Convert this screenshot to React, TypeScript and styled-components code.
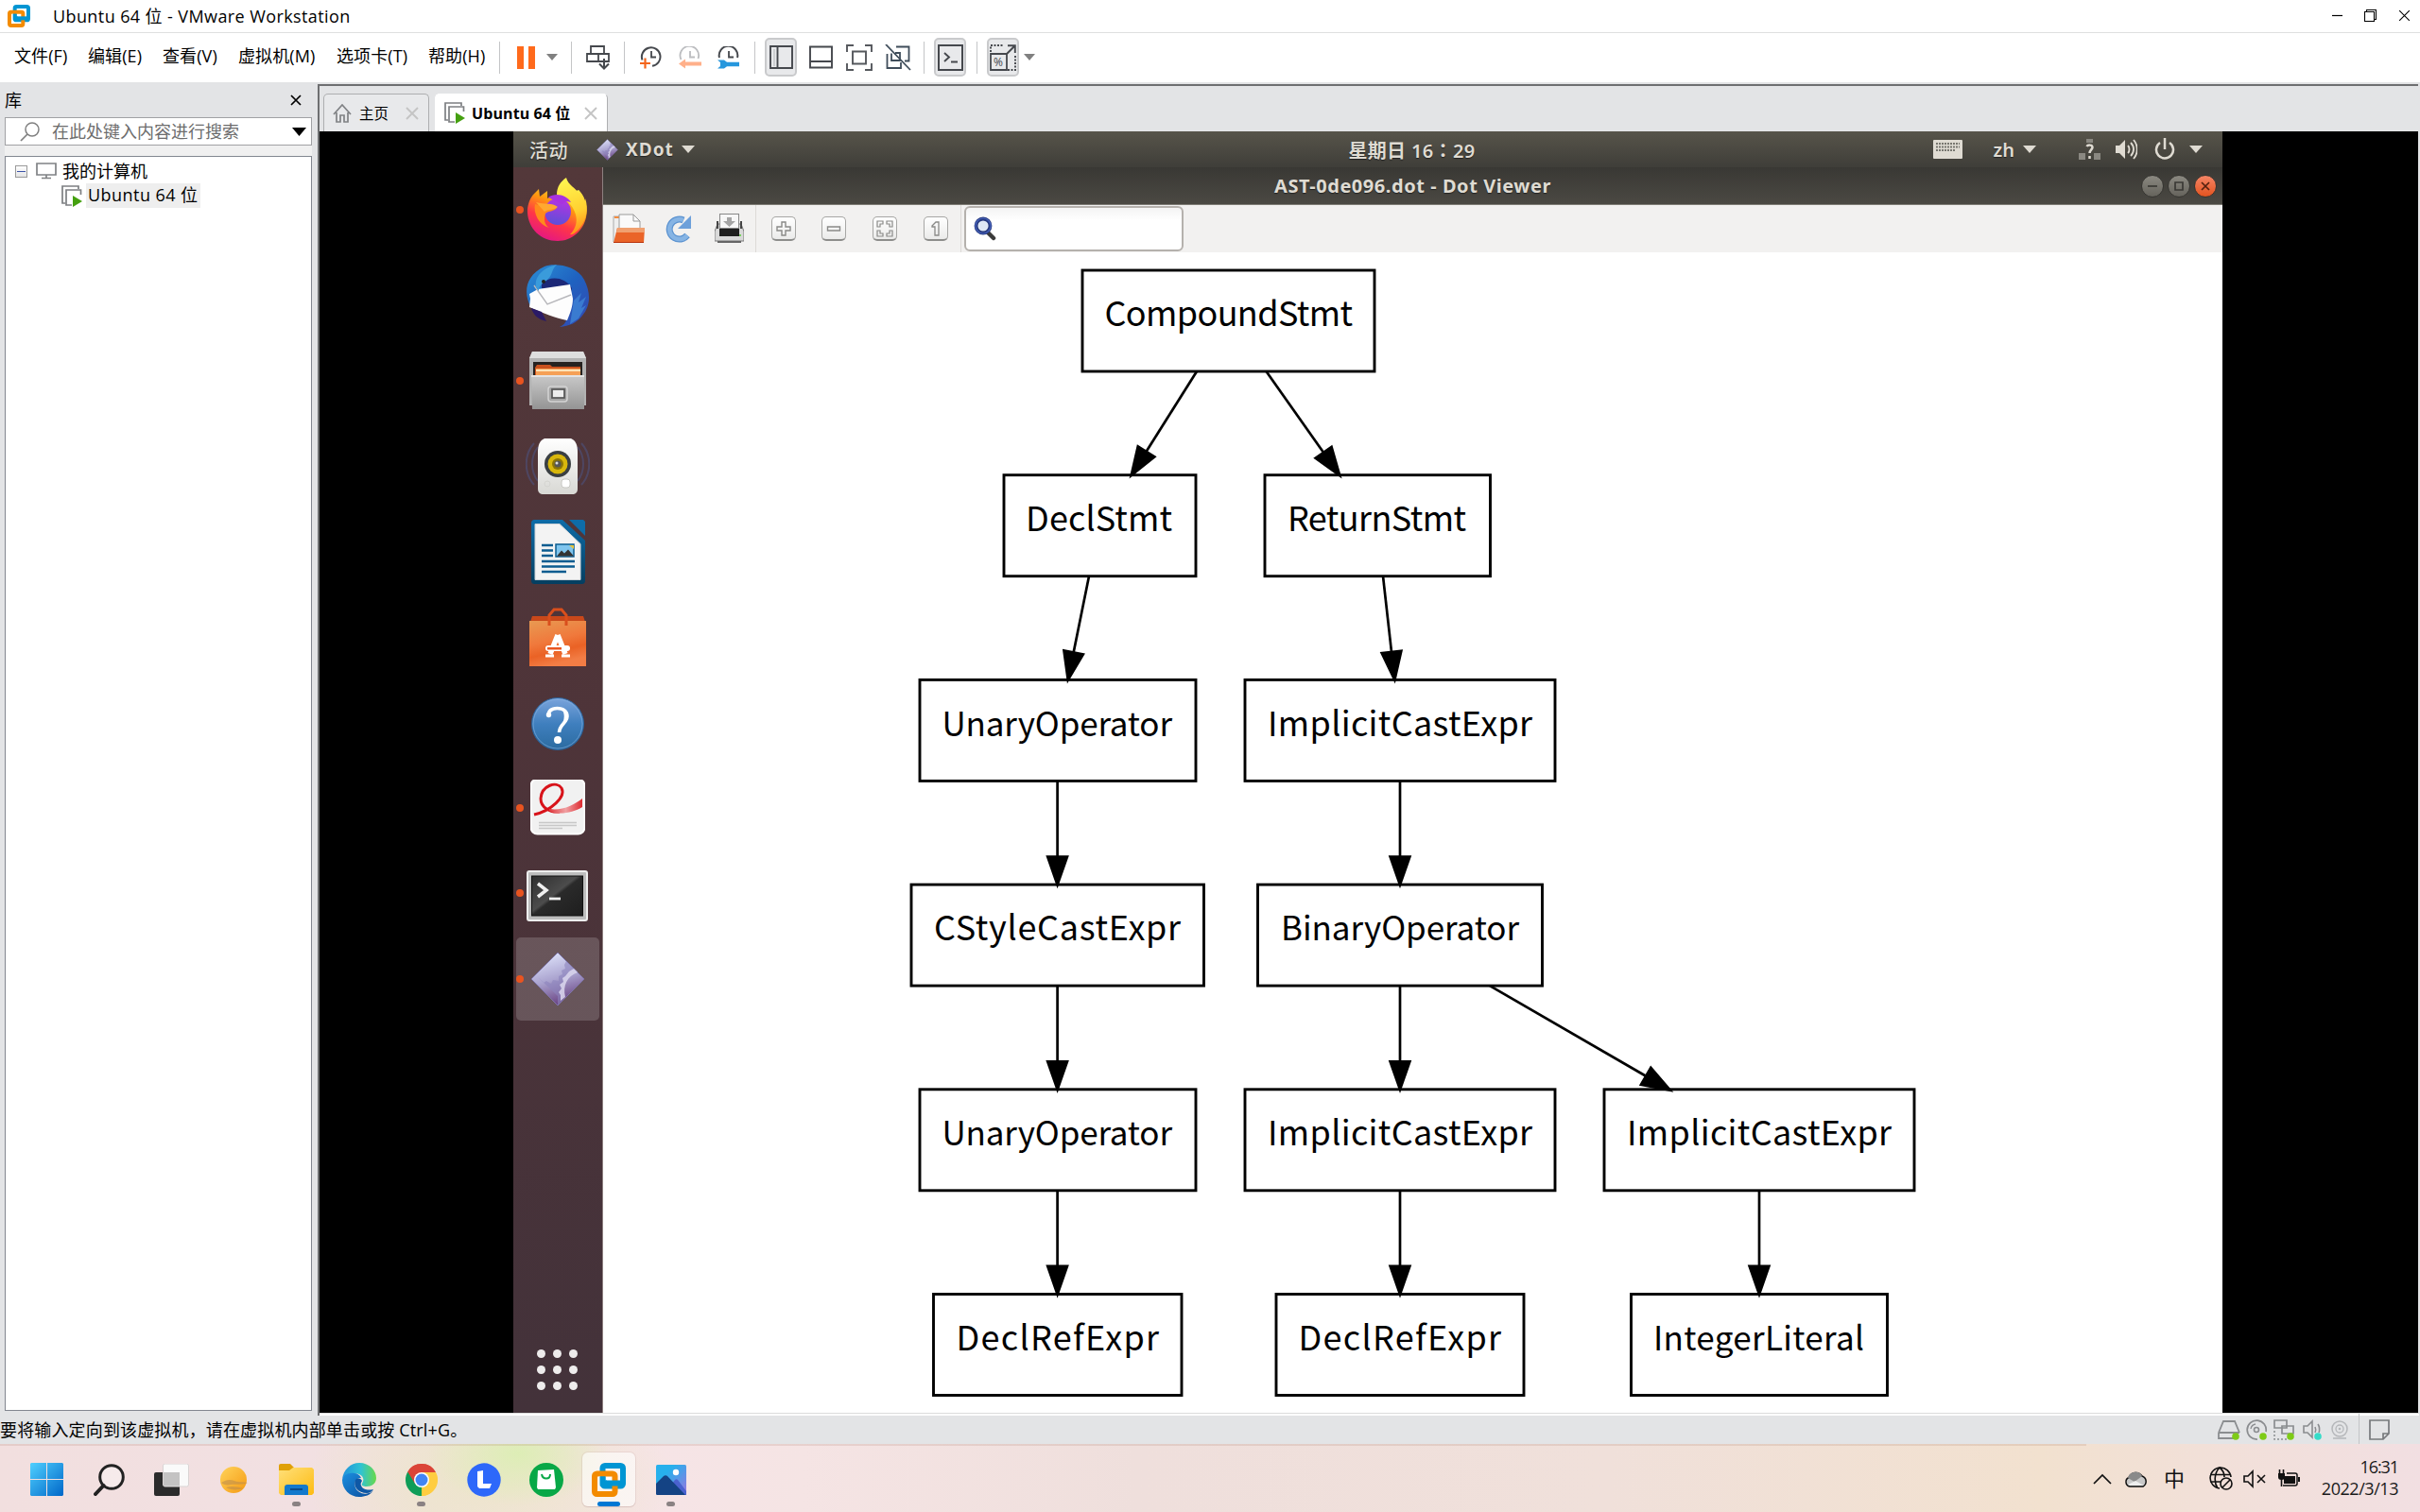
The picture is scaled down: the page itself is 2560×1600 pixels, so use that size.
import React from "react";
import styled, { createGlobalStyle, css } from "styled-components";

const Global = createGlobalStyle`
  * { box-sizing: border-box; }
  html, body { margin: 0; padding: 0; }
  body {
    width: 2560px; height: 1600px; overflow: hidden; background: #e3e4e6; color: #000;
    font: 18px "Open Sans", "Noto Sans CJK SC", sans-serif;
  }
  svg { display: block; flex: none; }
`;

/* ---------- shared pieces ---------- */

const Desktop = styled.div`
  width: 2560px; height: 1600px; display: flex; flex-direction: column; overflow: hidden;
`;

const Text = styled.span<{ $size?: number; $ls?: number; $color?: string; $weight?: number; $ml?: number; $lift?: number }>`
  flex: none;
  white-space: pre;
  font-size: ${(p) => p.$size ?? 18}px;
  letter-spacing: ${(p) => p.$ls ?? 0}px;
  color: ${(p) => p.$color ?? "#000"};
  font-weight: ${(p) => p.$weight ?? 400};
  margin-left: ${(p) => p.$ml ?? 0}px;
  padding-bottom: ${(p) => p.$lift ?? 0}px;
`;

const Slot = styled.div<{ $w: number; $ml?: number }>`
  flex: none; width: ${(p) => p.$w}px; margin-left: ${(p) => p.$ml ?? 0}px;
  display: flex; align-items: center; justify-content: center;
`;

type IconProps = { w: number; h: number; vb?: string; children: React.ReactNode };
const Icon = ({ w, h, vb, children }: IconProps) => (
  <svg width={w} height={h} viewBox={vb ?? `0 0 ${w} ${h}`} fill="none">
    {children}
  </svg>
);

const Caret = ({ w = 12, h = 7, c = "#808080" }) => (
  <Icon w={w} h={h}><path d={`M0 0H${w}L${w / 2} ${h}Z`} fill={c} /></Icon>
);

const VmwareLogo = ({ s }: { s: number }) => (
  <Icon w={s} h={s} vb="0 0 36 36">
    <rect x="14.500" y="14.500" width="7" height="7" fill="#fff" />
    <rect x="11.500" y="3" width="21.500" height="21.500" rx="2.500" stroke="#0095d3" strokeWidth="6" />
    <rect x="3" y="11.500" width="21.500" height="21.500" rx="2.500" stroke="#f38b00" strokeWidth="6" />
    <path d="M15 21.500H30" stroke="#0095d3" strokeWidth="6" />
    <path d="M11.500 14.500V21.500H16" stroke="#0095d3" strokeWidth="6" />
    <path d="M8 14v12" stroke="#fff" strokeWidth="1" opacity=".7" />
  </Icon>
);

/* ---------- title and menu bars ---------- */

const TitleBar = styled.div`
  flex: none; height: 35px; background: #fff; border-bottom: 1px solid #dedfe0;
  display: flex; align-items: center; padding-left: 8px; padding-bottom: 1px;
`;
const Spacer = styled.div`flex: 1;`;

const MenuBar = styled.div`
  flex: none; height: 52px; background: #fff; display: flex; align-items: center;
  padding-left: 15px; padding-bottom: 1px;
`;
const MenuItem = styled.span<{ $w: number }>`
  flex: none; width: ${(p) => p.$w}px; white-space: nowrap; letter-spacing: 0.1px; padding-bottom: 5px;
`;
const VRule = styled.div<{ $ml: number }>`
  flex: none; width: 1px; height: 34px; background: #c4c5c7; margin-left: ${(p) => p.$ml}px;
`;
const ToolButton = styled.div<{ $ml: number }>`
  flex: none; width: 34px; height: 41px; margin-left: ${(p) => p.$ml}px;
  background: #e8e9eb; border: 2px solid #c9cacc; border-radius: 5px;
  display: flex; align-items: center; justify-content: center;
`;

const S = "#45484d";

const menus: [string, number][] = [
  ["文件(F)", 78], ["编辑(E)", 79], ["查看(V)", 80], ["虚拟机(M)", 104], ["选项卡(T)", 97], ["帮助(H)", 75],
];

const MenuRow = () => (
  <MenuBar>
    {menus.map(([t, w]) => <MenuItem key={t} $w={w}>{t}</MenuItem>)}
    <VRule $ml={0} />
    <Slot $w={19} $ml={18}>
      <Icon w={19} h={24}><path d="M0 0h7v24H0zM12 0h7v24h-7z" fill="#ff6a1c" /></Icon>
    </Slot>
    <Slot $w={12} $ml={12}><Caret /></Slot>
    <VRule $ml={14} />
    <Slot $w={26} $ml={15}>
      <Icon w={26} h={26}>
        <path d="M5 1h14v8H5zM1 9h12v8H1zM13 9h11v8H13z" stroke={S} strokeWidth="1.800" />
        <path d="M19 14v10M14 19.500l5 5 5-5" stroke={S} strokeWidth="2" />
      </Icon>
    </Slot>
    <VRule $ml={14} />
    <Slot $w={24} $ml={16}>
      <Icon w={24} h={24}>
        <path d="M2.500 14.500A9.800 9.800 0 1 1 13 20.800" stroke={S} strokeWidth="2" /><path d="M12 5v6.500h5" stroke={S} strokeWidth="1.800" />
        <path d="M0 18h11M5.500 12.500v11" stroke="#f4651c" strokeWidth="2.200" />
      </Icon>
    </Slot>
    <Slot $w={24} $ml={17}>
      <Icon w={24} h={24}><path d="M2.500 14A9.800 9.800 0 1 1 20.500 13" stroke="#bcbdc0" strokeWidth="1.800" /><path d="M12 5v6.500h5" stroke="#bcbdc0" strokeWidth="1.800" /><path d="M0 18.500l7-5v3h17v4H7v3z" fill="#ffb08a" /></Icon>
    </Slot>
    <Slot $w={24} $ml={17}>
      <Icon w={24} h={24}><path d="M2 12A9.800 9.800 0 1 1 21 12" stroke={S} strokeWidth="2" /><path d="M12 5v6.500h5" stroke={S} strokeWidth="1.800" /><path d="M0 14.500h7l3 2.200h13v4.600H10l-3 2.200H0l3-2.500v-4z" fill="#2697dd" /></Icon>
    </Slot>
    <VRule $ml={15} />
    <ToolButton $ml={10}>
      <Icon w={25} h={26}><path d="M1 1h23v23H1zM8.500 1v23" stroke={S} strokeWidth="1.900" /><path d="M5 4v18" stroke="#c4c6c9" strokeWidth="1.500" /></Icon>
    </ToolButton>
    <Slot $w={25} $ml={13}>
      <Icon w={25} h={26}><path d="M1 1.500h23v22H1zM1 17h23" stroke={S} strokeWidth="1.900" /></Icon>
    </Slot>
    <Slot $w={28} $ml={14}>
      <Icon w={28} h={28}><path d="M1 8V1h7M20 1h7v7M27 20v7h-7M8 27H1v-7M7 7.500h14v13H7z" stroke="#55585d" strokeWidth="1.900" /></Icon>
    </Slot>
    <Slot $w={28} $ml={13}>
      <Icon w={28} h={28}>
        <path d="M12 2.500h13.500v15H21M2.500 10v15H17v-6M7 9.500V17h9V9h-5" stroke="#3f4d5a" strokeWidth="1.800" />
        <path d="M1 0l26 27" stroke="#3f4d5a" strokeWidth="1.800" />
      </Icon>
    </Slot>
    <VRule $ml={13} />
    <ToolButton $ml={10}>
      <Icon w={27} h={28}><path d="M1 1h25v26H1z" stroke={S} strokeWidth="2" /><path d="M7 9l5 4.500-5 4.500M14 18.500h7" stroke={S} strokeWidth="1.900" /></Icon>
    </ToolButton>
    <VRule $ml={11} />
    <ToolButton $ml={10}>
      <Icon w={28} h={28}>
        <path d="M1 10h17v17H1z" stroke={S} strokeWidth="1.800" />
        <path d="M1 8V1h14M27 12v15h-8" stroke={S} strokeWidth="1.900" strokeDasharray="2 1.500" />
        <path d="M18 10l8-8M19 1.200h7.800V9" stroke={S} strokeWidth="1.900" />
        <text x="4" y="23" fontSize="12" fill={S} fontFamily="Open Sans">%</text>
      </Icon>
    </ToolButton>
    <Slot $w={12} $ml={5}><Caret /></Slot>
  </MenuBar>
);

/* ---------- library panel ---------- */

const Body = styled.div`flex: none; height: 1411px; display: flex; background: #e3e4e6;`;

const Library = styled.div`
  flex: none; width: 336px; padding: 0 6px 6px 5px; display: flex; flex-direction: column;
`;
const LibraryHead = styled.div`
  flex: none; height: 37px; display: flex; align-items: center; justify-content: space-between;
  padding: 1px 11px 0 0;
`;
const SearchBox = styled.div`
  flex: none; height: 30px; width: 325px; border: 1px solid #a0a1a4; background: #fff;
  display: flex; align-items: center; padding: 0 5px 0 15px;
`;
const Gap = styled.div`flex: none; height: 11px; width: 325px; background: #f0f0f0;`;
const Tree = styled.div`
  flex: none; height: 1328px; width: 325px; border: 1px solid #828790; background: #fff; padding-top: 2px;
`;
const TreeRow = styled.div<{ $pl: number }>`
  height: 26px; display: flex; align-items: center; padding-left: ${(p) => p.$pl}px;
`;
const Selected = styled.span`
  background: #eeeeee; height: 26px; display: flex; align-items: center; padding: 0 2px 4px; margin-left: 4px;
`;
const Expander = styled.div`
  width: 13px; height: 13px; border: 1px solid #9a9a9a; background: linear-gradient(#fff, #e4e4e4);
  display: flex; align-items: center; justify-content: center;
  &::after { content: ""; width: 9px; height: 1px; background: #3c53a8; }
`;

const VmIcon = () => (
  <Icon w={22} h={23}>
    <path d="M4 19H1V1h17v3" stroke="#7d7f82" strokeWidth="1.700" />
    <path d="M20.500 10V5H5v16h6" stroke="#7d7f82" strokeWidth="1.700" />
    <path d="M12 11l10 6-10 6z" fill="#45a010" />
  </Icon>
);

const LibraryPanel = () => (
  <Library>
    <LibraryHead>
      <Text $lift={2}>库</Text>
      <Icon w={12} h={12}><path d="M1 1l10 10M11 1L1 11" stroke="#000" strokeWidth="1.700" /></Icon>
    </LibraryHead>
    <SearchBox>
      <Icon w={21} h={21}><circle cx="13" cy="8" r="7" stroke="#808080" strokeWidth="1.500" /><path d="M8 13l-7 7" stroke="#808080" strokeWidth="1.700" /></Icon>
      <Text $ml={13} $lift={2} $color="#6d6d6d">在此处键入内容进行搜索</Text>
      <Spacer />
      <Caret w={15} h={9} c="#000" />
    </SearchBox>
    <Gap />
    <Tree>
      <TreeRow $pl={10}>
        <Expander />
        <Slot $w={22} $ml={9}>
          <Icon w={22} h={18}><path d="M1 1h20v12H1zM11 13v3M6 16.500h10" stroke="#808285" strokeWidth="1.700" /></Icon>
        </Slot>
        <Text $ml={6} $lift={3}>我的计算机</Text>
      </TreeRow>
      <TreeRow $pl={59}>
        <VmIcon />
        <Selected><Text $ls={0.45}>Ubuntu 64 位</Text></Selected>
      </TreeRow>
    </Tree>
  </Library>
);

/* ---------- tabs ---------- */

const Stage = styled.div`
  flex: none; width: 2222px; margin-top: 2px; border-left: 2px solid #6e6f71; border-top: 2px solid #6e6f71;
  display: flex; flex-direction: column;
`;
const Tabs = styled.div`
  flex: none; height: 48px; display: flex; align-items: flex-end; padding-left: 4px; gap: 6px;
`;
const Tab = styled.div<{ $w: number; $active?: boolean }>`
  flex: none; width: ${(p) => p.$w}px; height: 40px; border: 1px solid #aeafb1; border-bottom: 0;
  border-radius: 5px 5px 0 0; display: flex; align-items: center; padding: 0 10px 0 9px;
  background: ${(p) => (p.$active ? "#fff" : "#e8e9eb")};
  ${(p) => p.$active && css`border-left-color: #fff; border-top-color: #fff;`}
`;
const TabClose = () => (
  <Icon w={14} h={14}><path d="M1 1l12 12M13 1L1 13" stroke="#c4c4c4" strokeWidth="1.900" /></Icon>
);

/* ---------- guest desktop ---------- */

const Screen = styled.div`
  flex: none; height: 1356px; width: 2220px; background: #000; display: flex; padding-left: 205px;
`;
const ScreenEdge = styled.div`flex: none; height: 3px; border-top: 1px solid #dcdcdc; background: #fff; width: 2221px;`;
const Guest = styled.div`
  flex: none; width: 1808px; height: 1356px; display: flex; flex-direction: column; overflow: hidden;
  font-family: "Noto Sans", "Noto Sans CJK TC", sans-serif;
`;
const TopBar = styled.div`
  flex: none; height: 38px; background: linear-gradient(#57544a, #3f3e39); display: flex; align-items: center;
  padding: 0 21px 0 17px; text-shadow: 0 1px 1px #222;
`;
const GuestMain = styled.div`flex: 1; display: flex;`;
const Dock = styled.div`
  flex: none; width: 95px; background: linear-gradient(#53383a, #4e3439 45%, #43323a);
  display: flex; flex-direction: column; border-right: 1px solid #8d8080;
`;
const DockItem = styled.div`
  flex: none; height: 90.400px; display: flex; align-items: center; padding-left: 3px;
`;
const RunDot = styled.div<{ $on?: boolean }>`
  flex: none; width: 8px; height: 8px; border-radius: 50%; background: ${(p) => (p.$on ? "#e95420" : "transparent")};
`;
const DockTile = styled.div<{ $active?: boolean }>`
  flex: none; width: 88px; height: 88px; border-radius: 5px; display: flex; align-items: center;
  background: ${(p) => (p.$active ? "rgba(255,255,255,.17)" : "transparent")};
`;
const AppsGrid = styled.div`
  margin: auto 0 24px 25px; display: grid; grid-template-columns: repeat(3, 9px); gap: 8px;
`;
const AppsDot = styled.div`width: 9px; height: 9px; border-radius: 50%; background: #eeecec;`;

const Firefox = () => (
  <Icon w={66} h={68}>
    <defs>
      <linearGradient id="ffa" x1=".8" y1="0" x2=".3" y2="1"><stop offset="0" stopColor="#fff44f" /><stop offset=".35" stopColor="#ff980e" /><stop offset=".65" stopColor="#ff3647" /><stop offset="1" stopColor="#e31587" /></linearGradient>
      <linearGradient id="ffb" x1=".6" y1="0" x2=".4" y2="1"><stop offset="0" stopColor="#b833e1" /><stop offset="1" stopColor="#5b4fd8" /></linearGradient>
      <linearGradient id="ffc" x1=".5" y1="0" x2=".7" y2="1"><stop offset="0" stopColor="#fff44f" /><stop offset=".6" stopColor="#ffd030" /><stop offset="1" stopColor="#ff8a16" /></linearGradient>
    </defs>
    <path d="M7 18L13 12l1 8 8-6v8c6-4 12-4 17-2l16-7c8 9 10 20 8 29C60 56 48 67 33 67 15 67 2 54 1 37c-.3-7 2-14 6-19z" fill="url(#ffa)" />
    <path d="M32 18c0-8 4-14 10-18 2 8 10 11 14 17l-1-4c4 4 6 8 7 12l0-3c4 11 1 22-4 29-4 6-9 10-12 9 6-6 8-13 6-21-3-11-11-16-20-21z" fill="url(#ffc)" />
    <circle cx="33" cy="36" r="14" fill="url(#ffb)" />
    <path d="M23 21c8-6 20-2 24 5-5-2-8 0-9 2z" fill="#a832e0" />
    <path d="M9 28c9 3 18-1 23 4-3 4-9 3-12 6-2 6-1 12 4 15C13 50 7 38 9 28z" fill="#ff8a1c" />
    <path d="M10 26c10 3 17 0 23 5-5 4-10 2-14 5z" fill="#ffa930" />
  </Icon>
);

const Thunderbird = () => (
  <Icon w={70} h={70}>
    <defs>
      <linearGradient id="tb" x1="0" y1="0" x2="1" y2="1"><stop offset="0" stopColor="#2b8fd6" /><stop offset=".5" stopColor="#1f62c0" /><stop offset="1" stopColor="#3647b0" /></linearGradient>
    </defs>
    <path d="M21 4C30 0 55 2 63 18c7 13 7 28-2 38-6 8-14 11-24 12 4-2 6-4 7-7L6 46C-1 32 0 14 21 4z" fill="url(#tb)" />
    <path d="M18 22C26 14 42 14 50 27l-2 9-30-9z" fill="#1c2878" />
    <path d="M14 28l34-5 3 15c0 8-3 16-6 23-12-2-26-8-40-14l1-9-1-5z" fill="#fdfdfd" />
    <path d="M10 24l14 20 25-10" stroke="#b7b7bb" strokeWidth="1.400" />
    <path d="M7 48l11 4 5 10C14 60 9 55 7 48z" fill="#2a1a66" />
    <path d="M12 26C10 14 20 5 34 2c-6 5-4 11-10 16-5 4-9 6-9 12z" fill="#3a9bdb" />
    <path d="M52 40l8-8-3 10 8-6-5 12 5-3-8 14-9 6z" fill="#3a7bd0" />
    <circle cx="20" cy="20" r="2" fill="#222" />
  </Icon>
);

const Files = () => (
  <Icon w={60} h={62}>
    <defs><linearGradient id="fl" x1="0" y1="0" x2="0" y2="1"><stop offset="0" stopColor="#c9c9c9" /><stop offset="1" stopColor="#949494" /></linearGradient></defs>
    <path d="M3 0h54l3 7v50H0V7z" fill="#b2b2b2" />
    <path d="M3 0h54l3 7H0z" fill="#dedede" />
    <rect x="4" y="11" width="52" height="16" fill="#262220" />
    <path d="M6 17l2-3h14l2 2h30v10H6z" fill="#c9511e" />
    <rect x="7" y="18" width="47" height="8" fill="#f5a056" />
    <rect x="7" y="19" width="47" height="2" fill="#fde3b8" />
    <path d="M2 25h56v36H3z" fill="url(#fl)" />
    <path d="M2 25h56v2H2z" fill="#e4e4e4" />
    <rect x="20" y="37" width="20" height="16" rx="3" fill="#a5a5a5" stroke="#d3d3d3" strokeWidth="1.500" />
    <rect x="24" y="40" width="13" height="9" fill="#ececec" stroke="#555" strokeWidth="1.700" />
  </Icon>
);

const Rhythmbox = () => (
  <Icon w={68} h={64} vb="0 -2 68 64">
    <defs><linearGradient id="rb" x1="0" y1="0" x2="0" y2="1"><stop offset="0" stopColor="#fff" /><stop offset="1" stopColor="#d8d8d4" /></linearGradient></defs>
    <path d="M9 6C-2 18-2 38 9 50M13 10C5 20 5 36 13 46M59 6c11 12 11 32 0 44M55 10c8 10 8 26 0 36" stroke="#4d5484" strokeWidth="2" opacity=".55" />
    <path d="M20 1h28c5 2 7 7 7 14v39c0 4-2 6-6 6H19c-4 0-6-2-6-6V15C13 8 15 3 20 1z" fill="url(#rb)" />
    <circle cx="34" cy="28" r="14" fill="#3a3f42" />
    <circle cx="34" cy="28" r="10.500" fill="#d8b70c" />
    <circle cx="34" cy="28" r="6" fill="#8a7408" />
    <circle cx="34" cy="28" r="3.500" fill="#555" />
    <circle cx="33" cy="27" r="1.500" fill="#ddd" />
    <rect x="38" y="44" width="9" height="9" rx="3" fill="#fff" stroke="#c8c8c4" />
    <circle cx="23" cy="49" r="3" stroke="#d4d4d0" />
  </Icon>
);

const Writer = () => (
  <Icon w={57} h={68}>
    <defs><linearGradient id="wr" x1="0" y1="0" x2="0" y2="1"><stop offset="0" stopColor="#0e6ca8" /><stop offset="1" stopColor="#053e60" /></linearGradient></defs>
    <path d="M4 0h29l24 22v42c0 3-1 4-4 4H4c-3 0-4-1-4-4V4c0-3 1-4 4-4z" fill="url(#wr)" />
    <path d="M40 0h15l2 2v15z" fill="#0e6ca8" />
    <path d="M4 4.500h26l22 21v38H4z" fill="#f3f3f3" stroke="#cfd4d8" />
    <path d="M11 27h12M11 32.500h12M11 38h12M11 44h35M11 49.500h35M11 55h26" stroke="#0b5c90" strokeWidth="2.600" />
    <rect x="26" y="26" width="19" height="13" fill="#7fc5ee" stroke="#0b5c90" strokeWidth="1.500" />
    <path d="M27 38.500l5-6 3 3 4-4 6 7z" fill="#333" /><path d="M40 27h5v4z" fill="#e8c43a" />
  </Icon>
);

const Software = () => (
  <Icon w={60} h={62}>
    <defs><linearGradient id="sw" x1="0" y1="0" x2=".3" y2="1"><stop offset="0" stopColor="#e89a52" /><stop offset=".5" stopColor="#f0793c" /><stop offset=".75" stopColor="#ea6225" /><stop offset="1" stopColor="#f27d45" /></linearGradient></defs>
    <path d="M3 9h54l2 6H1z" fill="#c9481a" />
    <rect y="14" width="60" height="48" fill="url(#sw)" />
    <path d="M21 19V8l5-6h8l5 6v11" stroke="#d94f1c" strokeWidth="3" />
    <path d="M30 29l-8 20M30 29l8 20" stroke="#fff" strokeWidth="5.500" />
    <path d="M17 51h9M34 51h9" stroke="#fff" strokeWidth="3" />
    <rect x="17" y="40" width="26" height="6" rx="3" fill="#fff" />
    <rect x="19" y="42" width="15" height="2.500" fill="#e9541f" />
  </Icon>
);

const Help = () => (
  <Icon w={58} h={60} vb="0 -2 58 60">
    <defs><linearGradient id="hp" x1="0" y1="0" x2="0" y2="1"><stop offset="0" stopColor="#7ba4dc" /><stop offset=".5" stopColor="#3f7fbe" /><stop offset="1" stopColor="#2b6ba0" /></linearGradient></defs>
    <circle cx="29" cy="29" r="27.500" fill="url(#hp)" stroke="#2a6198" />
    <circle cx="29" cy="29" r="26" stroke="#86b1e0" opacity=".6" />
    <path d="M19 21c0-6 4-8.500 9.500-8.500C35 12.500 39 16 39 21c0 7-8 8-8.500 17" stroke="#fff" strokeWidth="3.600" />
    <circle cx="19.500" cy="19.500" r="2.700" fill="#fff" /><path d="M33 13c8 3 8 11 1 16 2-5 3-11-1-16z" fill="#fff" />
    <circle cx="29" cy="46" r="4" fill="#fff" />
  </Icon>
);

const Reader = () => (
  <Icon w={58} h={60} vb="0 1 58 60">
    <defs><linearGradient id="rd" x1="0" y1="0" x2="1" y2="0"><stop offset="0" stopColor="#e03a40" /><stop offset=".5" stopColor="#f0a0a2" /><stop offset="1" stopColor="#de2a30" /></linearGradient></defs>
    <rect x=".5" y=".5" width="57" height="58" rx="7" fill="#f1f1f1" stroke="#fff" strokeWidth="2" />
    <path d="M4 38C22 34 38 19 33 10 28 2 12 7 11 21c0 9 9 15 20 14" stroke="#d8131a" strokeWidth="3" />
    <path d="M20 32c14 2 26-4 35-11v9c-10 6-25 9-35 4z" fill="url(#rd)" />
    <path d="M9 46.500h40M9 49.500h40M9 52.500h25" stroke="#c7c7c7" strokeWidth="1.600" />
  </Icon>
);

const Terminal = () => (
  <Icon w={66} h={59} vb="0 -5 66 59">
    <defs><linearGradient id="tm" x1="0" y1="0" x2="1" y2="1"><stop offset="0" stopColor="#2e2e2e" /><stop offset=".45" stopColor="#4c4c4c" /><stop offset=".5" stopColor="#2a2a2a" /><stop offset="1" stopColor="#1e1e1e" /></linearGradient></defs>
    <rect x="1" y="1" width="63" height="52" rx="2" fill="#bdbdbd" stroke="#eee" strokeWidth="2" />
    <rect x="5.500" y="6" width="54" height="42" fill="url(#tm)" stroke="#111" />
    <path d="M12 14l9 7-9 7" stroke="#f0f0f0" strokeWidth="3.500" /><path d="M24 30h12" stroke="#f0f0f0" strokeWidth="2.800" />
  </Icon>
);

const Diamond = ({ s, id }: { s: number; id: string }) => (
  <Icon w={s} h={s} vb="0 0 58 58">
    <defs><linearGradient id={id} x1=".3" y1="0" x2=".6" y2="1"><stop offset="0" stopColor="#dfe4fb" /><stop offset=".5" stopColor="#aaa3cf" /><stop offset="1" stopColor="#643a7c" /></linearGradient></defs>
    <path d="M29 1l28 28-28 28L1 29z" fill={`url(#${id})`} stroke="#7d74a8" />
    <path d="M38 10l-2 4 1 4-4 2 1 4-4 2 0 5-6-1-2 4-5-3-3 2-6-6 21 20 0 10 5-6c-3-14 3-24 16-30z" fill="#8c84bd" opacity=".6" />
    <path d="M46 18l-5 3-4 5-3 2 1 4-4 3 2 4-3 4 2 3 0 6 5-4c-3-12 2-22 13-26z" fill="#dcd8ef" opacity=".85" />
  </Icon>
);

const dockApps: { icon: React.ReactNode; on?: boolean; active?: boolean }[] = [
  { icon: <Firefox />, on: true }, { icon: <Thunderbird /> }, { icon: <Files />, on: true }, { icon: <Rhythmbox /> },
  { icon: <Writer /> }, { icon: <Software /> }, { icon: <Help /> }, { icon: <Reader />, on: true },
  { icon: <Terminal />, on: true }, { icon: <Diamond s={58} id="dmd" />, on: true, active: true },
];

/* ---------- dot viewer ---------- */

const Viewer = styled.div`flex: none; width: 1713px; display: flex; flex-direction: column; background: #fff;`;
const ViewerTitle = styled.div`
  flex: none; height: 40px; background: linear-gradient(#393834, #4b4943); border-bottom: 1px solid #7f7d76;
  display: grid; grid-template-columns: 1fr auto 1fr; align-items: center; text-shadow: 0 1px 1px #222;
`;
const WinButtons = styled.div`display: flex; justify-content: flex-end; gap: 4px; padding-right: 6px;`;
const WinButton = styled.div<{ $close?: boolean }>`
  width: 24px; height: 24px; border-radius: 50%; border: 1px solid #353430; display: flex; align-items: center; justify-content: center;
  background: ${(p) => (p.$close ? "linear-gradient(#f58566, #e2531f)" : "linear-gradient(#8b8981, #65635c)")};
`;
const ViewerTools = styled.div`
  flex: none; height: 50px; background: #f2f1f0; display: flex; align-items: center; padding-left: 10px;
`;
const ToolRule = styled.div<{ $ml: number }>`
  flex: none; width: 1px; height: 50px; background: #dcdad7; margin-left: ${(p) => p.$ml}px;
`;
const KeyButton = styled.div<{ $ml: number }>`
  flex: none; width: 26px; height: 26px; margin-left: ${(p) => p.$ml}px; border: 1px solid #a7a7a5; border-bottom: 2px solid #8d8d8b;
  border-radius: 5px; background: linear-gradient(#fff, #ebebea); display: flex; align-items: center; justify-content: center;
`;
const FindBox = styled.div`
  flex: none; width: 232px; height: 48px; margin-left: 3px; border: 2px solid #b5b1ad; border-radius: 6px;
  background: linear-gradient(#f4f4f4, #fff 30%); display: flex; align-items: center; padding-left: 8px;
`;

const K = "#8a8a88";

type Node = { label: string; x1: number; x2: number; row: number; t1: number; t2: number; size?: number };
const nodes: Node[] = [
  { label: "CompoundStmt", x1: 1145, x2: 1454, row: 0, t1: 1169.5, t2: 1430 },
  { label: "DeclStmt", x1: 1062, x2: 1265, row: 1, t1: 1086, t2: 1239 },
  { label: "ReturnStmt", x1: 1338, x2: 1576.5, row: 1, t1: 1363, t2: 1550 },
  { label: "UnaryOperator", x1: 973, x2: 1265, row: 2, t1: 997.5, t2: 1239, size: 35 },
  { label: "ImplicitCastExpr", x1: 1317, x2: 1645, row: 2, t1: 1342, t2: 1620 },
  { label: "CStyleCastExpr", x1: 964, x2: 1273.5, row: 3, t1: 989, t2: 1248 },
  { label: "BinaryOperator", x1: 1330.5, x2: 1631.5, row: 3, t1: 1356, t2: 1606, size: 35 },
  { label: "UnaryOperator", x1: 973, x2: 1265, row: 4, t1: 997.5, t2: 1239, size: 35 },
  { label: "ImplicitCastExpr", x1: 1317, x2: 1645, row: 4, t1: 1342, t2: 1620 },
  { label: "ImplicitCastExpr", x1: 1697, x2: 2025, row: 4, t1: 1722, t2: 2000 },
  { label: "DeclRefExpr", x1: 987.5, x2: 1250, row: 5, t1: 1012.5, t2: 1225 },
  { label: "DeclRefExpr", x1: 1350, x2: 1612, row: 5, t1: 1374.5, t2: 1587 },
  { label: "IntegerLiteral", x1: 1725.5, x2: 1996.5, row: 5, t1: 1750, t2: 1971, size: 35 },
];
const ROW0 = 286;
const PITCH = 216.7;
const BOX = 107;
const top = (r: number) => ROW0 + PITCH * r;

/* from x, to x, source row */
const edges: [number, number, number][] = [
  [1266, 1196, 0], [1339.5, 1418, 0], [1152, 1129.5, 1], [1463, 1475.5, 1],
  [1118.6, 1118.6, 2], [1481, 1481, 2], [1118.6, 1118.6, 3], [1481, 1481, 3], [1576, 1768, 3],
  [1118.6, 1118.6, 4], [1481, 1481, 4], [1861, 1861, 4],
];

const GraphCanvas = styled.svg`
  font-family: "Noto Sans CJK SC", sans-serif;
`;

const Graph = () => (
  <GraphCanvas width="1713" height="1228" viewBox="638 267 1713 1228">
    {nodes.map((n, i) => (
      <g key={i}>
        <rect x={n.x1} y={top(n.row)} width={n.x2 - n.x1} height={BOX} fill="#fff" stroke="#000" strokeWidth="2.900" />
        <text x={n.t1 - 1} y={top(n.row) + 59.2} fontSize={n.size ?? 36} textLength={n.t2 - n.t1 + 2} fill="#000">{n.label}</text>
      </g>
    ))}
    {edges.map(([a, b, r], i) => {
      const y1 = top(r) + BOX;
      const y2 = top(r + 1) + 1.5;
      const len = Math.hypot(b - a, y2 - y1);
      const ux = (b - a) / len, uy = (y2 - y1) / len;
      const bx = b - ux * 31.5, by = y2 - uy * 31.5;
      return (
        <g key={i}>
          <path d={`M${a} ${y1}L${bx} ${by}`} stroke="#000" strokeWidth="2.700" />
          <path d={`M${b} ${y2}L${bx - uy * 11} ${by + ux * 11}L${bx + uy * 11} ${by - ux * 11}Z`} fill="#000" stroke="#000" strokeWidth="1.800" />
        </g>
      );
    })}
  </GraphCanvas>
);

const GL = "#dfdbd2";

const GuestDesktop = () => (
  <Guest>
    <TopBar>
      <Text $size={20} $ls={0.5} $weight={500} $color={GL}>活动</Text>
      <Slot $w={23} $ml={30}><Diamond s={23} id="dms" /></Slot>
      <Text $size={19} $weight={700} $color={GL} $ml={8} $ls={1}>XDot</Text>
      <Slot $w={14} $ml={8}><Caret w={14} h={8} c={GL} /></Slot>
      <Spacer />
      <Text $size={20} $weight={600} $color={GL} $ls={0.35}>星期日 16：29</Text>
      <Slot $w={31} $ml={484}>
        <Icon w={31} h={20}><rect width="31" height="20" rx="1" fill={GL} /><path d="M3 4h25M3 7.500h25M3 11h20" stroke="#77766f" strokeWidth="2" strokeDasharray="2 1" /></Icon>
      </Slot>
      <Text $size={20} $weight={600} $color={GL} $ml={33}>zh</Text>
      <Slot $w={14} $ml={9}><Caret w={14} h={8} c={GL} /></Slot>
      <Slot $w={24} $ml={45}>
        <Icon w={24} h={24}><path d="M8 1h7v4H8zM0 16h7v7H0zM16 16h7v7h-7z" fill="#8a8881" /><path d="M8.500 9c1-2 6-2 6 1 0 2-3 3-3 6M11.500 19v3" stroke={GL} strokeWidth="2.500" /></Icon>
      </Slot>
      <Slot $w={23} $ml={15}>
        <Icon w={23} h={22}><path d="M0 7h4l6-6v20l-6-6H0z" fill={GL} /><path d="M13 7c2 2 2 6 0 8M16 4c4 4 4 10 0 14M19 1c5 6 5 14 0 20" stroke={GL} strokeWidth="1.900" /></Icon>
      </Slot>
      <Slot $w={22} $ml={18}>
        <Icon w={22} h={24}><path d="M6 5a9 9 0 1 0 10 0M11 0v12" stroke={GL} strokeWidth="2.500" /></Icon>
      </Slot>
      <Slot $w={14} $ml={15}><Caret w={14} h={8} c={GL} /></Slot>
    </TopBar>
    <GuestMain>
      <Dock>
        {dockApps.map((a, i) => (
          <DockItem key={i}>
            <DockTile $active={a.active}>
              <RunDot $on={a.on} />
              <Slot $w={72}>{a.icon}</Slot>
            </DockTile>
          </DockItem>
        ))}
        <AppsGrid>{Array.from({ length: 9 }, (_, i) => <AppsDot key={i} />)}</AppsGrid>
      </Dock>
      <Viewer>
        <ViewerTitle>
          <span />
          <Text $size={20} $weight={700} $color={GL} $ls={0.55}>AST-0de096.dot - Dot Viewer</Text>
          <WinButtons>
            <WinButton><Icon w={10} h={10}><path d="M0 5h10" stroke="#3a3935" strokeWidth="1.700" /></Icon></WinButton>
            <WinButton><Icon w={10} h={10}><path d="M1 1h8v8H1z" stroke="#3a3935" strokeWidth="1.700" /></Icon></WinButton>
            <WinButton $close><Icon w={10} h={10}><path d="M1 1l8 8M9 1L1 9" stroke="#54200f" strokeWidth="1.700" /></Icon></WinButton>
          </WinButtons>
        </ViewerTitle>
        <ViewerTools>
          <Icon w={35} h={32}>
            <path d="M1 3h10v27H1z" fill="#eee" stroke="#aaa" /><path d="M2 4h6" stroke="#f58b3c" strokeWidth="2" />
            <path d="M7 1h15l7 7v12H7z" fill="#fafafa" stroke="#9a9a9a" /><path d="M22 1v7h7" stroke="#9a9a9a" />
            <path d="M5 15h29l-1 16H1z" fill="#ea6428" /><path d="M5 15h29v5H4z" fill="#f0a070" /><path d="M1 30.500h32" stroke="#b8330c" />
          </Icon>
          <Slot $w={28} $ml={20}>
            <Icon w={28} h={30}><path d="M24 22A10.500 10.500 0 1 1 20 6" stroke="#5c93d0" strokeWidth="7" /><path d="M24 22A10.500 10.500 0 1 1 20 6" stroke="#86b4e4" strokeWidth="4.500" /><path d="M28 1v14H14z" fill="#6da0da" /></Icon>
          </Slot>
          <Slot $w={31} $ml={25}>
            <Icon w={31} h={32}>
              <path d="M3 11h25l3 8v10H0V19z" fill="#d9d9d9" stroke="#777" /><rect x="5" y="16" width="21" height="8" fill="#1f1f1f" />
              <rect x="5.500" y=".5" width="20" height="15" fill="#f7f7f7" stroke="#888" /><path d="M13 4h5v4h4l-6.500 6L9 8h4z" fill="#a5a5a5" />
              <path d="M3 29h25v2H3z" fill="#666" /><path d="M3 8v8M28 8v8" stroke="#444" strokeWidth="2" /><circle cx="27" cy="23" r="1" fill="#5c3" />
            </Icon>
          </Slot>
          <ToolRule $ml={12} />
          <KeyButton $ml={16}><Icon w={16} h={16}><path d="M6 1h4v5h5v4h-5v5H6v-5H1V6h5z" stroke={K} strokeWidth="1.400" /></Icon></KeyButton>
          <KeyButton $ml={27}><Icon w={16} h={16}><path d="M1.500 6h13v4h-13z" stroke={K} strokeWidth="1.400" /></Icon></KeyButton>
          <KeyButton $ml={28}><Icon w={18} h={18}><path d="M1 7V1h6v3H4v3zM17 7V1h-6v3h3v3zM1 11v6h6v-3H4v-3zM17 11v6h-6v-3h3v-3z" stroke={K} strokeWidth="1.200" /></Icon></KeyButton>
          <KeyButton $ml={28}><Icon w={12} h={16}><path d="M2 5l4-4h3v14H5V6H2z" stroke={K} strokeWidth="1.300" /></Icon></KeyButton>
          <ToolRule $ml={13} />
          <FindBox>
            <Icon w={24} h={26}><path d="M15 17l6 6" stroke="#3a3a3a" strokeWidth="4.500" strokeLinecap="round" /><circle cx="10" cy="10" r="7.500" fill="#dfe8f5" stroke="#26397f" strokeWidth="3.800" /><circle cx="10" cy="10" r="8" stroke="#4a66c0" strokeWidth="1.200" /></Icon>
          </FindBox>
        </ViewerTools>
        <Graph />
      </Viewer>
    </GuestMain>
  </Guest>
);

/* ---------- status bar ---------- */

const StatusBar = styled.div`
  flex: none; height: 30px; background: #e3e4e6; display: flex; align-items: center; padding-right: 32px;
`;
const G = "#8b8d90";

const StatusRow = () => (
  <StatusBar>
    <Text $ls={0.15} $lift={2}>要将输入定向到该虚拟机，请在虚拟机内部单击或按 Ctrl+G。</Text>
    <Spacer />
    <Icon w={24} h={22}><path d="M1 14l5-12h12l5 12M1 14h22M1 14v6h17" stroke={G} strokeWidth="1.800" /><circle cx="19" cy="18" r="3.800" fill="#7ecb17" /></Icon>
    <Slot $w={23} $ml={6}><Icon w={23} h={22}><path d="M12 21A10 10 0 1 1 21 13" stroke={G} strokeWidth="1.700" /><circle cx="11" cy="11" r="2.500" stroke={G} strokeWidth="1.600" /><path d="M5 10a6 6 0 0 1 5-5" stroke={G} strokeWidth="1.300" /><circle cx="18" cy="18" r="3.800" fill="#7ecb17" /></Icon></Slot>
    <Slot $w={23} $ml={6}><Icon w={23} h={22}><path d="M1 1h13v8H1zM9 7h12v8H9z" fill="#e3e4e6" stroke={G} strokeWidth="1.700" /><path d="M1 12v9h13" stroke={G} strokeWidth="1.500" strokeDasharray="2 2" /><circle cx="18" cy="18" r="3.800" fill="#7ecb17" /></Icon></Slot>
    <Slot $w={21} $ml={8}><Icon w={21} h={22}><path d="M1 7h4l5-5v17l-5-5H1z" stroke={G} strokeWidth="1.600" /><path d="M13 8c1 2 1 4 0 6M16 5c2 3 2 6 1 9" stroke={G} strokeWidth="1.600" /><circle cx="16" cy="18" r="3.800" fill="#35dcc8" /></Icon></Slot>
    <Slot $w={18} $ml={9}><Icon w={18} h={20}><circle cx="9" cy="9" r="8" stroke="#b5b7ba" strokeWidth="1.500" /><circle cx="9" cy="9" r="4" stroke="#b5b7ba" strokeWidth="1.300" /><circle cx="9" cy="9" r="1.300" fill="#b5b7ba" /><path d="M2 19h14" stroke="#b5b7ba" strokeWidth="1.500" /></Icon></Slot>
    <VRule $ml={11} />
    <Slot $w={22} $ml={10}><Icon w={22} h={22}><path d="M1 1h20v14l-6 6H1zM15 21v-6h6" stroke="#77797c" strokeWidth="1.700" /></Icon></Slot>
  </StatusBar>
);

/* ---------- windows taskbar ---------- */

const Taskbar = styled.div`
  flex: none; height: 72px; display: flex; align-items: center; padding: 1px 23px 0 16.5px;
  background:
    linear-gradient(rgba(160,110,90,.17), rgba(160,110,90,.17)) 0 0 / 2207px 2px no-repeat,
    radial-gradient(ellipse 95px 55px at 548px 10px, rgba(220,238,180,.95), rgba(226,236,195,0)),
    radial-gradient(ellipse 200px 90px at 520px 40px, rgba(236,230,200,.8), rgba(240,230,210,0)),
    linear-gradient(90deg, #f2dfdf 0, #f2e0e2 330px, #f0e2d8 460px, #f6e4e6 700px, #f5e4e4 850px, #efdfdc 1200px, #f0e0da 1700px, #f2e1cf 2160px, #f2e0d8 2330px, #f2dfe2 2560px);
`;
const TaskSlot = styled.div`
  flex: none; width: 66.050px; height: 71px; display: flex; flex-direction: column; align-items: center;
  padding-top: 8px;
`;
const TaskTile = styled.div<{ $active?: boolean }>`
  flex: none; width: 56px; height: 57px; border-radius: 6px; display: flex; align-items: center; justify-content: center;
  ${(p) => p.$active && css`background: rgba(255,255,255,.6); box-shadow: 0 0 0 1px rgba(190,150,150,.18), 0 1px 1px rgba(120,80,80,.15);`}
`;
const TaskMark = styled.div<{ $active?: boolean; $run?: boolean }>`
  flex: none; height: 5px; margin-top: -5px; border-radius: 3px;
  width: ${(p) => (p.$active ? 24 : 9)}px;
  background: ${(p) => (p.$active ? "#0078d4" : p.$run ? "#8a8283" : "transparent")};
`;
const Stamp = styled.div`
  width: 104px; display: flex; flex-direction: column; align-items: flex-end; line-height: 23px; padding-bottom: 2px;
`;

const Windows = () => (
  <Icon w={35} h={35}>
    <defs><linearGradient id="wn" x1="0" y1="0" x2="1" y2="1"><stop offset="0" stopColor="#4fd0ff" /><stop offset="1" stopColor="#0067c8" /></linearGradient></defs>
    <path d="M1 0h16v17H0V1zM18 0h16l1 1v16H18zM0 18h17v17H1l-1-1zM18 18h17v16l-1 1H18z" fill="url(#wn)" />
  </Icon>
);
const Search = () => (
  <Icon w={33} h={34}><circle cx="19" cy="14" r="12.300" stroke="#222" strokeWidth="3" fill="rgba(255,255,255,.35)" /><path d="M10.500 23L2 32" stroke="#222" strokeWidth="4" strokeLinecap="round" /></Icon>
);
const TaskView = () => (
  <Icon w={37} h={34}>
    <rect y="9" width="27" height="25" rx="2" fill="#2b2b2b" /><rect x="9.500" y="0" width="27" height="24" rx="2" fill="#fafafa" stroke="#d9d4d4" /><rect x="10" y="9" width="17" height="14.500" fill="#c4c3c3" />
  </Icon>
);
const Weather = () => (
  <Icon w={31} h={30}>
    <defs><linearGradient id="we" x1="0" y1="0" x2="1" y2="1"><stop offset="0" stopColor="#ffd35a" /><stop offset="1" stopColor="#f59a14" /></linearGradient></defs>
    <circle cx="15" cy="15" r="14" fill="url(#we)" /><path d="M2 18c5-3 9-4 14-2s10 1 14 2c-6 3-13 1-18 2-4 1-8 0-10-2zM7 23c6-2 12-1 18 1-5 2-14 2-18-1z" fill="#b98a4e" opacity=".55" />
  </Icon>
);
const Explorer = () => (
  <Icon w={37} h={33}>
    <defs><linearGradient id="ex" x1="0" y1="0" x2="1" y2="1"><stop offset="0" stopColor="#ffe07a" /><stop offset="1" stopColor="#fdbb12" /></linearGradient></defs>
    <path d="M0 2a2 2 0 0 1 2-2h10l4 4v8H0z" fill="#e0a007" /><path d="M0 7h11l4-3h20l2 2v25l-2 2H2l-2-2z" fill="url(#ex)" />
    <path d="M6 33V25c0-2 1-3 3-3h19c2 0 3 1 3 3v8z" fill="#1379cc" /><path d="M12 27h13" stroke="#0a4c8c" strokeWidth="2" />
  </Icon>
);
const Edge = () => (
  <Icon w={36} h={36}>
    <defs>
      <linearGradient id="ea" x1="0" y1=".3" x2="1" y2=".3"><stop offset="0" stopColor="#2090dc" /><stop offset=".55" stopColor="#2fc3d2" /><stop offset="1" stopColor="#68d94a" /></linearGradient>
      <linearGradient id="eb" x1="0" y1="0" x2="1" y2="1"><stop offset="0" stopColor="#1a8fe0" /><stop offset="1" stopColor="#0c4d9c" /></linearGradient>
    </defs>
    <path d="M0 18C1 7 9 0 18 0c11 0 18 8 18 16 0 6-5 9-10 9-4 0-6-1-5-3 4-6-1-11-8-11C6 11 1 14 0 18z" fill="url(#ea)" />
    <path d="M0 18c1-5 6-8 13-7 3 0 6 2 7 5-6 0-8 5-6 10s8 8 14 6c2 0 4-2 5-3-3 5-9 7-15 7C8 36 0 28 0 18z" fill="url(#eb)" />
    <path d="M14 18c-3 7 3 14 12 14 3 0 6-2 7-4-5 1-11 1-13-4-1-2 0-3 1-5-2-3-5-3-7-1z" fill="#0e58a6" />
  </Icon>
);
const Chrome = () => (
  <Icon w={34} h={34}>
    <path d="M17 17L2.280 8.500A17 17 0 0 1 31.720 8.500z" fill="#db4437" /><path d="M17 17L31.720 8.500A17 17 0 0 1 17 34z" fill="#ffcd40" /><path d="M17 17L17 34A17 17 0 0 1 2.280 8.500z" fill="#0f9d58" />
    <path d="M17 9h14.700A17 17 0 0 1 17 34l7-13z" fill="#ffcd40" /><path d="M17 9h14.900A17 17 0 0 0 2.300 8.500L10 21z" fill="#db4437" />
    <circle cx="17" cy="17" r="8" fill="#fff" /><circle cx="17" cy="17" r="6.500" fill="#4285f4" />
  </Icon>
);
const Lapp = () => (
  <Icon w={36} h={36}><circle cx="18" cy="18" r="17.700" fill="#2d68fa" /><path d="M11 9l6-1v14h9l-2 5H13l-2-2z" fill="#fff" /></Icon>
);
const Store = () => (
  <Icon w={36} h={36}><circle cx="18" cy="18" r="18" fill="#08a847" /><path d="M9 8l17-1 2 19-1 2H9l-1-2z" fill="#fff" /><path d="M13 12c1 6 9 6 9 0" stroke="#08a847" strokeWidth="2" /></Icon>
);
const Photos = () => (
  <Icon w={32} h={32}>
    <defs><linearGradient id="ph" x1="0" y1="0" x2="1" y2="1"><stop offset=".3" stopColor="#27b0ec" /><stop offset="1" stopColor="#9a74e0" /></linearGradient></defs>
    <rect width="32" height="32" rx="1.500" fill="url(#ph)" /><path d="M14 24l6-8c1-1 2-1 3 0l9 12v4H14z" fill="#4a62cf" /><path d="M0 20l8-8c1-1 3-1 4 0l19 20H1l-1-1z" fill="#144384" /><circle cx="21" cy="8" r="3.200" fill="#fff" />
  </Icon>
);

const tasks: { icon: React.ReactNode; active?: boolean; run?: boolean }[] = [
  { icon: <Windows /> }, { icon: <Search /> }, { icon: <TaskView /> }, { icon: <Weather /> }, { icon: <Explorer />, run: true },
  { icon: <Edge /> }, { icon: <Chrome />, run: true }, { icon: <Lapp /> }, { icon: <Store /> },
  { icon: <VmwareLogo s={36} />, active: true }, { icon: <Photos />, run: true },
];
const B = "#111";

const TaskbarRow = () => (
  <Taskbar>
    {tasks.map((t, i) => (
      <TaskSlot key={i}>
        <TaskTile $active={t.active}>{t.icon}</TaskTile>
        <TaskMark $active={t.active} $run={t.run} />
      </TaskSlot>
    ))}
    <Spacer />
    <Icon w={20} h={12}><path d="M1 11l9-9 9 9" stroke={B} strokeWidth="1.700" /></Icon>
    <Slot $w={25} $ml={13}><Icon w={25} h={18}><path d="M6 17a5 5 0 0 1-1-9.500A8 8 0 0 1 19 6a6 6 0 0 1 1 11z" fill="#c9c9c9" stroke={B} strokeWidth="1.500" /><path d="M4 8a8 8 0 0 1 15-2l-8 6z" fill="#8a8a8a" /><path d="M4 15l8-4 9 5H6z" fill="#eee" /></Icon></Slot>
    <Slot $w={22} $ml={17}><Text $size={22} $color={B} $lift={4}>中</Text></Slot>
    <Slot $w={25} $ml={26}>
      <Icon w={25} h={25}>
        <path d="M11 23A11 11 0 1 1 23 11M1 8.500h21M1 16h11M9 23C5 17 5 7 11 1c4 3 5 7 5 10" stroke={B} strokeWidth="1.600" />
        <circle cx="18" cy="18" r="6" stroke={B} strokeWidth="1.600" /><path d="M14 22l8-8" stroke={B} strokeWidth="1.600" />
      </Icon>
    </Slot>
    <Slot $w={24} $ml={11}><Icon w={24} h={20}><path d="M1 7h4l5-5v16l-5-5H1zM15 6l8 8M23 6l-8 8" stroke={B} strokeWidth="1.600" /></Icon></Slot>
    <Slot $w={24} $ml={12}>
      <Icon w={24} h={20}>
        <path d="M1 4h7v4c0 2-1 3-3.500 3S1 10 1 8z" fill={B} /><path d="M2.500 0v4M6.500 0v4M4.500 10v8" stroke={B} strokeWidth="1.600" /><path d="M10 4h9c1 0 2 1 2 2v9c0 1-1 2-2 2H6" stroke={B} strokeWidth="1.500" /><rect x="7" y="7" width="12" height="8" fill={B} /><rect x="22" y="8" width="2" height="5" fill={B} />
      </Icon>
    </Slot>
    <Stamp><Text $ls={-1.1} $color="#1a1a1a">16:31</Text><Text $ls={-0.45} $color="#1a1a1a">2022/3/13</Text></Stamp>
  </Taskbar>
);

/* ---------- page ---------- */

export default function App() {
  return (
    <Desktop>
      <Global />
      <TitleBar>
        <VmwareLogo s={24} />
        <Text $ml={24} $ls={0.4} $lift={1}>Ubuntu 64 位 - VMware Workstation</Text>
        <Spacer />
        <Slot $w={13}><Icon w={11} h={13}><path d="M0 6.500h11" stroke="#000" strokeWidth="1.200" /></Icon></Slot>
        <Slot $w={13} $ml={22}><Icon w={13} h={13}><path d="M.5 2.500h10v10H.5zM2.500 2.500V.5h10v10h-2" stroke="#000" strokeWidth="1.100" /></Icon></Slot>
        <Slot $w={13} $ml={23}><Icon w={11} h={11}><path d="M0 0l11 11M11 0L0 11" stroke="#000" strokeWidth="1.100" /></Icon></Slot>
        <Slot $w={10} />
      </TitleBar>
      <MenuRow />
      <Body>
        <LibraryPanel />
        <Stage>
          <Tabs>
            <Tab $w={112}>
              <Icon w={20} h={20}><path d="M1 11L10 1l9 10M4 9v10h4v-7h4v7h4V9" stroke="#808285" strokeWidth="1.700" /></Icon>
              <Text $size={15.5} $ml={8} $lift={1}>主页</Text><Spacer /><TabClose />
            </Tab>
            <Tab $w={183} $active>
              <VmIcon />
              <Text $size={16} $weight={700} $ml={7} $lift={1} $ls={0.1}>Ubuntu 64 位</Text><Spacer /><TabClose />
            </Tab>
          </Tabs>
          <Screen><GuestDesktop /></Screen>
          <ScreenEdge />
        </Stage>
      </Body>
      <StatusRow />
      <TaskbarRow />
    </Desktop>
  );
}
